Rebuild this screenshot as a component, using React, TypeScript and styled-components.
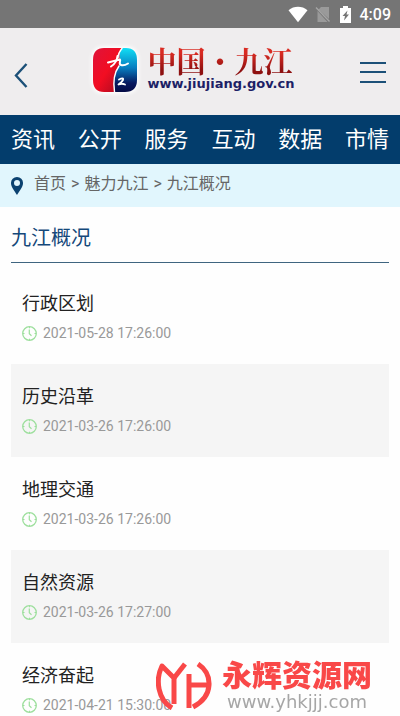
import React from "react";
import styled, { createGlobalStyle } from "styled-components";

const GlobalStyle = createGlobalStyle`
  *, *::before, *::after { box-sizing: border-box; }
  html { scrollbar-width: none; }
  body {
    margin: 0;
    background: #fefefe;
    font-family: Roboto, "Noto Sans CJK SC", sans-serif;
  }
  h1, h2, ul, ol, p { margin: 0; padding: 0; font-weight: 400; }
  ul, ol { list-style: none; }
  a { color: inherit; text-decoration: none; }
`;

const StatusBar = styled.div`
  display: flex;
  align-items: center;
  justify-content: flex-end;
  height: 28px;
  padding: 1px 9px 0;
  background: #757575;
  color: #fff;
  font-size: 16px;
  font-weight: 500;
  line-height: 28px;
`;

const StatusIcons = styled.div`
  display: flex;
  align-items: center;
  gap: 7px;
  margin-right: 7px;
  svg { display: block; }
`;

const Header = styled.header`
  display: flex;
  align-items: center;
  justify-content: space-between;
  height: 87px;
  padding: 0 13px;
  background: #efedee;
`;

const IconButton = styled.button`
  display: flex;
  padding: 0;
  border: 0;
  background: none;
  color: #1c5078;
  cursor: pointer;
`;

const Brand = styled.a`
  display: flex;
  align-items: center;
  gap: 10px;
  margin-bottom: 4px;
`;

const BrandMark = styled.svg`
  display: block;
  margin: -2px;
  filter: drop-shadow(0 0 2px #fff) drop-shadow(0 0 2px #fff);
`;

const BrandText = styled.span`
  display: flex;
  flex-direction: column;
  padding-bottom: 4px;
`;

const BrandName = styled.span`
  background: linear-gradient(#d92b22 25%, #8e1010 80%);
  background-clip: text;
  color: transparent;
  font-family: "Noto Serif CJK SC", "Noto Sans CJK SC", serif;
  font-size: 29px;
  font-weight: 700;
  line-height: 32px;
  white-space: nowrap;
`;

const BrandUrl = styled.span`
  color: #1d1f66;
  font-family: "DejaVu Sans", sans-serif;
  font-size: 13px;
  font-weight: 700;
  line-height: 14px;
`;

const Nav = styled.nav`
  display: flex;
  align-items: center;
  justify-content: space-between;
  height: 49px;
  padding: 0 11px;
  background: #033d6c;
  color: #fff;
  font-size: 22px;
  line-height: 48px;
`;

const Breadcrumb = styled.nav`
  display: flex;
  align-items: center;
  height: 43px;
  padding: 0 11px 4px;
  background: #e1f6fd;
  color: #666;
  font-size: 16px;
  line-height: 24px;
  svg { margin: 5px 11px 0 0; }
`;

const Crumbs = styled.ol`
  display: flex;
  li + li::before {
    content: ">";
    margin: 0 5px;
  }
`;

const Main = styled.main`
  padding: 0 11px;
`;

const Title = styled.h1`
  padding: 15px 0 8px;
  border-bottom: 1px solid #3f6580;
  color: #14487a;
  font-size: 20px;
  line-height: 32px;
`;

const List = styled.ul`
  padding-top: 8px;
`;

const Item = styled.li`
  padding: 20px 11px 19px;
  &:nth-child(even) { background: #f5f5f5; }
`;

const ItemTitle = styled.h2`
  color: #222;
  font-size: 18px;
  line-height: 26px;
`;

const ItemDate = styled.p`
  display: flex;
  align-items: center;
  gap: 6px;
  margin-top: 4px;
  color: #999;
  font-size: 14px;
  line-height: 24px;
`;

const Watermark = styled.aside`
  position: fixed;
  right: 28px;
  bottom: 4px;
  display: flex;
  align-items: center;
  gap: 10px;
  pointer-events: none;
`;

const WatermarkName = styled.strong`
  display: block;
  color: #f94848;
  font-size: 30px;
  font-weight: 900;
  line-height: 32px;
`;

const WatermarkUrl = styled.span`
  display: block;
  color: #a6a6a6;
  font-family: "DejaVu Sans", sans-serif;
  font-size: 18px;
  line-height: 20px;
  text-align: center;
`;

const navItems = ["资讯", "公开", "服务", "互动", "数据", "市情"];
const crumbs = ["首页", "魅力九江", "九江概况"];
const articles = [
  { title: "行政区划", date: "2021-05-28 17:26:00" },
  { title: "历史沿革", date: "2021-03-26 17:26:00" },
  { title: "地理交通", date: "2021-03-26 17:26:00" },
  { title: "自然资源", date: "2021-03-26 17:27:00" },
  { title: "经济奋起", date: "2021-04-21 15:30:00" },
];

const Clock = () => (
  <svg width="15" height="16" viewBox="0 0 15 16" fill="none" stroke="#9ddf9d" aria-hidden="true">
    <circle cx="7.5" cy="8.5" r="6.8" strokeWidth="1.3" />
    <path d="M7.3 4.5v4.2l2.2 2" strokeWidth="1.2" />
    <path d="M7.5 2v1.3M7.5 13.7V15M1 8.5h1.5M12.5 8.5H14" />
  </svg>
);

export default function App() {
  return (
    <>
      <GlobalStyle />
      <StatusBar>
        <StatusIcons>
          <svg width="20" height="17" viewBox="0 0 20 17" fill="#fff" aria-hidden="true">
            <path d="M0.5 4.2C6-.4 14-.4 19.5 4.2L10 16.2z" />
          </svg>
          <svg width="16" height="17" viewBox="0 0 16 17" aria-hidden="true">
            <path d="M6 1h8v12L3.5 3.5zM2.5 5l10 11h-10z" fill="#9a9a9a" />
            <path d="M1 1.5l13.5 14" stroke="#a6a6a6" strokeWidth="1.4" />
          </svg>
          <svg width="15" height="17" viewBox="0 0 15 17" aria-hidden="true">
            <path d="M5 0h5v2h3v15H2V2h3z" fill="#fff" />
            <path d="M9.5 4.5L4.5 10h2.5l-1 4.5L11 8.5H8.5z" fill="#757575" />
          </svg>
        </StatusIcons>
        <time>4:09</time>
      </StatusBar>

      <Header>
        <IconButton type="button" aria-label="返回">
          <svg width="16" height="32" viewBox="0 0 16 32" fill="none" stroke="currentColor" strokeWidth="2.4">
            <path d="M13.5 8L3 19.5L13.5 31" />
          </svg>
        </IconButton>
        <Brand href="#">
          <BrandMark width="48" height="48" viewBox="-2 -2 48 48" aria-hidden="true">
            <defs>
              <linearGradient id="markRed" x1="0" y1="0" x2="1" y2="1">
                <stop offset="0" stopColor="#df143b" />
                <stop offset="0.5" stopColor="#f20d22" />
                <stop offset="1" stopColor="#a50b20" />
              </linearGradient>
              <linearGradient id="markBlue" x1="0" y1="0" x2="0" y2="1">
                <stop offset="0" stopColor="#11dff5" />
                <stop offset="0.45" stopColor="#087dc0" />
                <stop offset="0.8" stopColor="#07185e" />
                <stop offset="1" stopColor="#050b45" />
              </linearGradient>
            </defs>
            <path d="M11 0H29C24 6 29 13 26 18C21 25 20 33 22 44H11Q0 44 0 32V12Q0 0 11 0z" fill="url(#markRed)" />
            <path d="M29 0h4q11 0 11 12v20q0 12-12 12H22C20 33 21 25 26 18C29 13 24 6 29 0z" fill="url(#markBlue)" />
            <g fill="none" stroke="#fff" strokeLinecap="round" strokeLinejoin="round">
              <path d="M29 0.5C26 4 25 7 25 10M26 18C21 25 20 34 21.5 44" strokeWidth="1.4" />
              <path d="M15 14.5L27 11.5C28 13 25 16 28 17Q31 18 35 15.5" strokeWidth="2" />
              <path d="M24.5 8C24 13 22 16 18 18.5" strokeWidth="2" />
              <path d="M26 31.5Q31 29 30 32Q29 34 25.5 36.5Q29 35 32 36.5" strokeWidth="1.8" />
            </g>
          </BrandMark>
          <BrandText>
            <BrandName>中国・九江</BrandName>
            <BrandUrl>www.jiujiang.gov.cn</BrandUrl>
          </BrandText>
        </Brand>
        <IconButton type="button" aria-label="菜单">
          <svg width="28" height="24" viewBox="0 0 28 24" fill="none" stroke="currentColor" strokeWidth="2">
            <path d="M1 3h26M1 12h26M1 22h26" />
          </svg>
        </IconButton>
      </Header>

      <Nav aria-label="主导航">
        {navItems.map((label) => (
          <a href="#" key={label}>{label}</a>
        ))}
      </Nav>

      <Breadcrumb aria-label="当前位置">
        <svg width="12" height="18" viewBox="0 0 12 18" aria-hidden="true">
          <path fillRule="evenodd" fill="#0b4270" d="M6 0a6 6 0 0 1 6 6.2C12 10 8 14.5 6 18C4 14.5 0 10 0 6.2A6 6 0 0 1 6 0zM6 3a3 3 0 1 0 0 6a3 3 0 0 0 0-6z" />
        </svg>
        <Crumbs>
          {crumbs.map((label) => (
            <li key={label}><a href="#">{label}</a></li>
          ))}
        </Crumbs>
      </Breadcrumb>

      <Main>
        <Title>九江概况</Title>
        <List>
          {articles.map((article) => (
            <Item key={article.title}>
              <ItemTitle><a href="#">{article.title}</a></ItemTitle>
              <ItemDate>
                <Clock />
                <time>{article.date}</time>
              </ItemDate>
            </Item>
          ))}
        </List>
      </Main>

      <Watermark>
        <svg width="56" height="48" viewBox="0 0 56 48" fill="none" stroke="#f94848" strokeWidth="5" strokeLinejoin="round" aria-hidden="true">
          <path d="M16 46C2 38 -1 18 6 4L18 16V42" />
          <path d="M29 2L18 16" />
          <path d="M33 12V46M33 23H52" />
          <path d="M42 2C57 12 58 34 37 45" />
        </svg>
        <span>
          <WatermarkName>永辉资源网</WatermarkName>
          <WatermarkUrl>www.yhkjjj.com</WatermarkUrl>
        </span>
      </Watermark>
    </>
  );
}
